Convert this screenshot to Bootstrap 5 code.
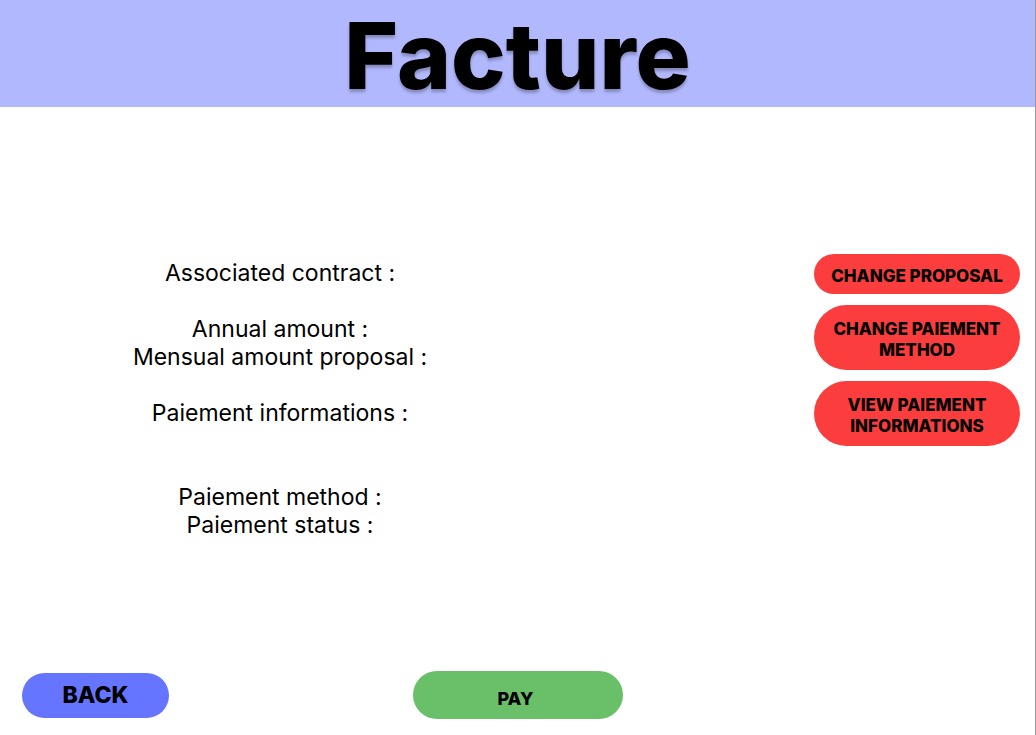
<!DOCTYPE html>
<html lang="en">
<head>
<meta charset="utf-8">
<meta name="viewport" content="width=device-width, initial-scale=1">
<title>Facture</title>
<link rel="stylesheet" href="https://cdn.jsdelivr.net/npm/bootstrap@5.3.0/dist/css/bootstrap.min.css">
<style>
body { font-family: Inter, "Liberation Sans", sans-serif; color: #000; background: #fff; border-right: 1px solid #999; }
.top-bar { background: #b1b8fd; height: 107px; }
.page-title { font-size: 92px; line-height: 112px; font-weight: 800; text-shadow: 0 3px 3px rgba(0,0,0,.25); }
.main-area { padding-top: 147px; }
.facts { width: 320px; margin-left: 120px; padding-top: 5px; font-size: 23px; line-height: 28px; }
.facts p { margin: 0; }
.facts .group { margin-bottom: 28px; }
.facts .group-wide { margin-bottom: 56px; }
.pill { border: 0; border-radius: 40px; font-weight: 800; color: #000; padding: 0; }
.side-actions { width: 206px; margin-right: 15px; gap: 11px; }
.side-actions .pill { background: #fc3d3d; font-size: 17px; line-height: 21px; }
.pill-short { height: 40px; padding-top: 4px; }
.pill-tall { height: 65px; padding-top: 5px; }
.bottom-bar { display: grid; grid-template-columns: 1fr 210px 1fr; padding: 0 22px 16px; }
.pill-back { background: #6575ff; width: 147px; height: 45px; font-size: 23px; line-height: 28px; }
.pill-pay { background: #6ac069; height: 48px; font-size: 18px; line-height: 22px; padding: 8px 4px 0 0; }
</style>
</head>
<body class="d-flex flex-column min-vh-100">
<header class="top-bar text-center"><h1 class="page-title m-0">Facture</h1></header>
<main class="main-area flex-grow-1 d-flex justify-content-between align-items-start">
<div class="facts text-center">
<div class="group">
<p>Associated contract :</p>
</div>
<div class="group">
<p>Annual amount :</p>
<p>Mensual amount proposal :</p>
</div>
<div class="group-wide">
<p>Paiement informations :</p>
</div>
<div>
<p>Paiement method :</p>
<p>Paiement status :</p>
</div>
</div>
<div class="side-actions d-flex flex-column">
<button type="button" class="pill pill-short">CHANGE PROPOSAL</button>
<button type="button" class="pill pill-tall">CHANGE PAIEMENT<br>METHOD</button>
<button type="button" class="pill pill-tall">VIEW PAIEMENT<br>INFORMATIONS</button>
</div>
</main>
<footer class="bottom-bar align-items-center">
<button type="button" class="pill pill-back">BACK</button>
<button type="button" class="pill pill-pay">PAY</button>
</footer>
<script src="https://cdn.jsdelivr.net/npm/bootstrap@5.3.0/dist/js/bootstrap.bundle.min.js"></script>
</body>
</html>
